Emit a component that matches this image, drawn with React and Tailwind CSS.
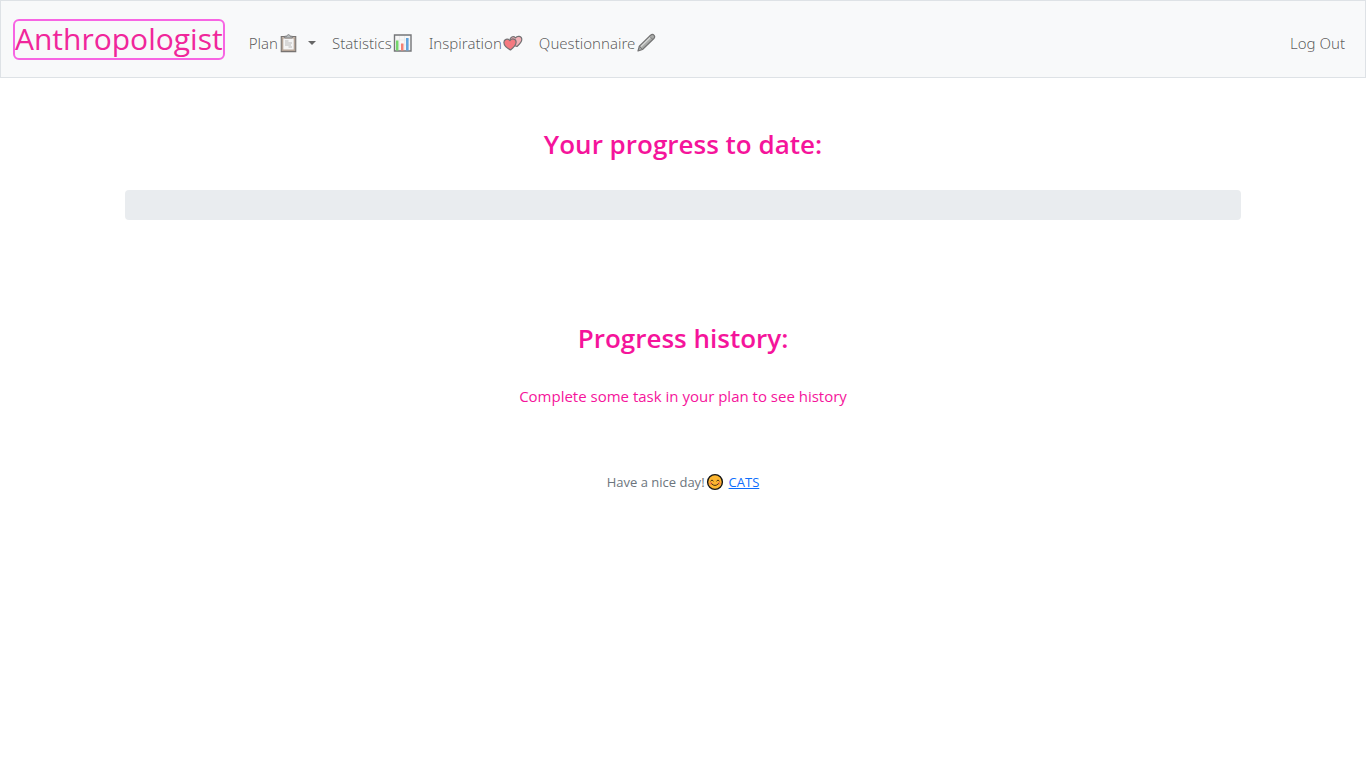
import React from 'react';

function ClipboardIcon() {
  return (
    <svg aria-hidden="true" className="h-5 w-5 shrink-0" viewBox="0 0 20 20" fill="none">
      <path d="M2.300 3.600H16.700v15H2.300z" fill="#f4f4f4" stroke="#777371" strokeWidth="1.200" />
      <path d="M3.600 4.900h11.800v12.400H3.600z" stroke="#b5a496" strokeWidth="1.400" />
      <path d="M5.700 5V3.200h2.200C8.100 2.100 8.700 1.600 9.500 1.600s1.400.5 1.600 1.600h2.200V5z" fill="#b9bdbf" stroke="#777" strokeWidth=".8" />
      <path d="M6 8h3.500M6 10h7M6 12h6M9.500 14H13" stroke="#bababa" strokeWidth="1" />
    </svg>
  );
}

function ChartIcon() {
  return (
    <svg aria-hidden="true" className="h-5 w-5 shrink-0" viewBox="0 0 20 20" fill="none">
      <path d="M1.500 2h16.500v16H1.500z" fill="#f7f7f7" stroke="#747678" strokeWidth="1.400" />
      <path d="M6.500 3v14M11.500 3v14M2 7h15M2 12h15" stroke="#e6e8e9" strokeWidth=".7" />
      <path d="M3 7.500h2.500v10H3z" fill="#74d66e" />
      <path d="M8 10.500h2.500v7H8z" fill="#f47f72" />
      <path d="M13 5h2.600v12.500H13z" fill="#62a3dc" />
    </svg>
  );
}

function HeartsIcon() {
  return (
    <svg aria-hidden="true" className="h-5 w-5 shrink-0" viewBox="0 0 20 20" fill="none" stroke="#737173" strokeWidth="1.200" strokeLinejoin="round">
      <path d="M14 13.500C10 12.500 7.300 10.500 7 7.500c-.2-3.400 3.300-5 5.500-2.600 2-2.700 6.200-1.800 6.300 1.400.1 2.700-2.200 5-4.800 7.200z" fill="#f3b0b6" />
      <path d="M7.500 17C3.500 15 1 12.500.900 9.600.800 6.300 4.700 5 6.900 7.700c2.200-3 6.300-1.800 6.200 1.500-.1 2.900-2.700 5.500-5.600 7.800z" fill="#f47980" />
    </svg>
  );
}

function CrayonIcon() {
  return (
    <svg aria-hidden="true" className="h-5 w-5 shrink-0" viewBox="0 0 20 20" fill="none" stroke="#747474" strokeWidth="1.200" strokeLinejoin="round">
      <path d="m2 18 1.300-4.700L14.600 2.200c1.200-1 2.700-.8 3.500.1.800 1 .7 2.200-.2 3.200L6.500 16.500z" fill="#a9aba9" />
      <path d="m5 13.500 10-9.700" stroke="#d6d7d6" strokeWidth="1.200" />
      <path d="m3.300 13.300 3.200 3.200M13.600 3.300l3.300 3.200" strokeWidth=".9" />
    </svg>
  );
}

function SmileIcon() {
  return (
    <svg aria-hidden="true" className="h-[18px] w-[18px] shrink-0" viewBox="0 0 18 18" fill="none">
      <circle cx="9" cy="9" r="7.400" fill="#fdb62f" stroke="#171717" strokeWidth="1.400" />
      <circle cx="4.800" cy="10.300" r="1.500" fill="#f98745" />
      <circle cx="13.200" cy="10.300" r="1.500" fill="#f98745" />
      <path d="M4.700 7.900q1.300-2.200 2.600 0M10.700 7.900q1.300-2.200 2.600 0M5.600 10.800q3.400 3.600 6.800 0" stroke="#34240f" strokeWidth=".9" strokeLinecap="round" />
    </svg>
  );
}

const linkClass = 'flex items-center gap-px px-2 py-2 text-black/65';

export default function App() {
  return (
    <div className="font-['Noto_Sans','Open_Sans',sans-serif] text-[15px] leading-6 font-light">
      <nav className="flex items-center border border-[#dee2e6] bg-[#f8f9fa] px-3 py-2.5">
        <a href="#home" className="mr-4 flex h-[41px] items-center rounded-md border-2 border-[#f765e3] font-['Open_Sans',sans-serif] text-[30px] leading-9 font-normal text-[#f0269b]">
          Anthropologist
        </a>
        <div className="flex grow items-center pt-3 pb-1">
          <button type="button" aria-haspopup="menu" className={linkClass}>
            Plan
            <ClipboardIcon />
            <svg aria-hidden="true" className="ml-2 h-1 w-2" viewBox="0 0 8 4"><path d="M0 0h8L4 4z" fill="#666" /></svg>
          </button>
          <a href="#statistics" className={linkClass}>Statistics<ChartIcon /></a>
          <a href="#inspiration" className={linkClass}>Inspiration<HeartsIcon /></a>
          <a href="#questionnaire" className={linkClass}>Questionnaire<CrayonIcon /></a>
          <a href="#logout" className="ml-auto px-2 py-2 text-black/65">Log Out</a>
        </div>
      </nav>

      <main className="mx-auto max-w-[1140px] px-3 pt-12 text-center font-['Open_Sans','Noto_Sans',sans-serif] text-[#f5149b]">
        <h1 className="text-[26px] leading-9 font-semibold">Your progress to date:</h1>
        <div role="progressbar" aria-label="Your progress to date" aria-valuenow={0} aria-valuemin={0} aria-valuemax={100} className="mt-7 h-[30px] rounded bg-[#e9ecef]" />
        <h2 className="mt-[100px] text-[26px] leading-9 font-semibold">Progress history:</h2>
        <p className="mt-7 font-normal">Complete some task in your plan to see history</p>
      </main>

      <footer className="mt-16 flex items-center justify-center gap-px pb-4 font-['Open_Sans','Noto_Sans',sans-serif] text-[13px] leading-5 font-normal text-[#6c757d]">
        <span>Have a nice day!</span>
        <SmileIcon />
        <a href="#cats" className="ml-1 text-[#0d6efd] underline">CATS</a>
      </footer>
    </div>
  );
}
